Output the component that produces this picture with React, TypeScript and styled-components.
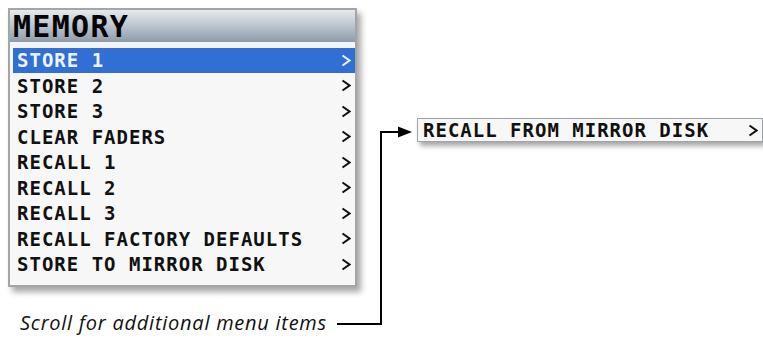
import styled, { createGlobalStyle } from 'styled-components';

const GlobalStyle = createGlobalStyle`
    html, body {
        margin: 0;
        padding: 0;
        background: #ffffff;
        overflow: hidden;
    }
`;

const Stage = styled.div`
    width: 763px;
    height: 343px;
    padding: 8px 0 0 8px;
    box-sizing: border-box;
    display: flex;
    align-items: flex-start;
`;

const LeftColumn = styled.div`
    display: flex;
    flex-direction: column;
    width: 349px;
    flex-shrink: 0;
`;

const Panel = styled.div`
    width: 349px;
    height: 279px;
    box-sizing: border-box;
    border: 2px solid #a3a6a9;
    background: #f7f7f7;
    box-shadow: 4px 5px 6px rgba(0, 0, 0, 0.35);
    display: flex;
    flex-direction: column;
`;

const Header = styled.div`
    height: 32px;
    background: linear-gradient(#e6e9ed 0%, #c9d0d7 35%, #8d9cab 100%);
    display: flex;
    align-items: center;
    padding-left: 3px;
    font-family: "DejaVu Sans Mono", monospace;
    font-weight: bold;
    font-size: 30px;
    letter-spacing: 1.3px;
    color: #050505;
`;

const HeaderGap = styled.div`
    height: 5.5px;
    background: #f4f4f4;
`;

const List = styled.div`
    display: flex;
    flex-direction: column;
    padding-left: 3px;
`;

const Row = styled.div<{ $active?: boolean }>`
    height: 25.5px;
    display: flex;
    align-items: center;
    justify-content: space-between;
    padding: 0 4px 0 4px;
    background: ${(p) => (p.$active ? '#316fd4' : 'transparent')};
    color: ${(p) => (p.$active ? '#eef3ff' : '#111111')};
    font-family: "DejaVu Sans Mono", monospace;
    font-weight: bold;
    font-size: 19px;
    letter-spacing: 1px;
`;

const Chevron = styled.svg`
    flex-shrink: 0;
`;

const Caption = styled.div`
    margin-top: 24px;
    margin-left: 12px;
    font-family: "Open Sans", sans-serif;
    font-style: italic;
    font-size: 20px;
    letter-spacing: 0.75px;
    line-height: 24px;
    color: #111111;
    white-space: nowrap;
`;

const Connector = styled.svg`
    flex-shrink: 0;
    margin-left: -20px;
`;

const SubMenu = styled.div`
    margin-top: 110px;
    margin-left: 5px;
    width: 346px;
    height: 24px;
    box-sizing: border-box;
    border: 1px solid #9fa3a7;
    background: #f7f7f7;
    box-shadow: 3px 4px 5px rgba(0, 0, 0, 0.35);
    display: flex;
    align-items: center;
    justify-content: space-between;
    padding: 0 4px 0 5px;
    flex-shrink: 0;
    font-family: "DejaVu Sans Mono", monospace;
    font-weight: bold;
    font-size: 19px;
    letter-spacing: 1px;
    color: #111111;
`;

const items = [
    'STORE 1',
    'STORE 2',
    'STORE 3',
    'CLEAR FADERS',
    'RECALL 1',
    'RECALL 2',
    'RECALL 3',
    'RECALL FACTORY DEFAULTS',
    'STORE TO MIRROR DISK',
];

const Arrow = () => (
    <Chevron width="10" height="13" viewBox="0 0 10 13">
        <path d="M1.5 1.5 L8.5 6.5 L1.5 11.5" fill="none" stroke="currentColor" strokeWidth="2" />
    </Chevron>
);

export default function App() {
    return (
        <>
            <GlobalStyle />
            <Stage>
                <LeftColumn>
                    <Panel>
                        <Header>MEMORY</Header>
                        <HeaderGap />
                        <List>
                            {items.map((item, i) => (
                                <Row key={item} $active={i === 0}>
                                    <span>{item}</span>
                                    <Arrow />
                                </Row>
                            ))}
                        </List>
                    </Panel>
                    <Caption>Scroll for additional menu items</Caption>
                </LeftColumn>
                <Connector width="75" height="330" viewBox="0 0 75 330">
                    <path d="M0 316 H44 V124 H62" fill="none" stroke="#000" strokeWidth="2" />
                    <polygon points="61,118.5 75,124 61,129.5" fill="#000" />
                </Connector>
                <SubMenu>
                    <span>RECALL FROM MIRROR DISK</span>
                    <Arrow />
                </SubMenu>
            </Stage>
        </>
    );
}
